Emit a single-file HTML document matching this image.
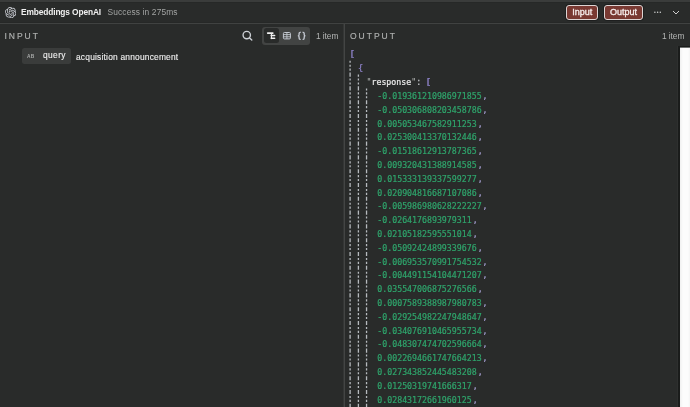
<!DOCTYPE html>
<html>
<head>
<meta charset="utf-8">
<title>Embeddings OpenAI</title>
<style>
html,body{margin:0;padding:0;}
body{width:690px;height:407px;overflow:hidden;background:#292b2a;position:relative;font-family:"Liberation Sans",sans-serif;color:#e8e8e8;}
.abs{position:absolute;white-space:nowrap;}
#topstrip{left:0;top:0;width:690px;height:1.8px;background:#3a3c3b;border-bottom:1.2px solid #262827;}
#hdrline{left:0;top:23.2px;width:690px;height:1.3px;background:#404241;border-top:1.3px solid #262827;margin-top:-1.3px;}
#vdiv{left:342.7px;top:24px;width:2.4px;height:383px;background:#343635;border-right:1px solid #434544;box-sizing:border-box;}
#title{left:21px;top:6.5px;font-size:8.4px;letter-spacing:-0.14px;line-height:11px;font-weight:bold;color:#f0f0f0;}
#status{left:107.5px;top:6.5px;font-size:8.4px;letter-spacing:0.14px;line-height:11px;color:#a3a5a4;}
.sect{font-size:8.5px;line-height:10px;letter-spacing:2px;color:#b0b2b1;-webkit-text-stroke:0.15px;}
#inlabel{left:4.4px;top:31px;}
#outlabel{left:350px;top:31px;}
.items{letter-spacing:-0.06px;font-size:8.4px;line-height:11px;color:#b4b6b5;}
#items1{left:315.9px;top:31px;}
#items2{left:661.9px;top:31px;}
#pill{left:21.5px;top:47.7px;width:49.5px;height:16px;background:#3a3c3b;border-radius:2.5px;}
#ab{left:27px;top:53.8px;font-size:4.8px;line-height:6px;font-weight:bold;color:#a9abaa;letter-spacing:.3px;}
#qkey{left:43px;top:50.3px;letter-spacing:0.4px;-webkit-text-stroke:0.12px;font-size:8.4px;line-height:11px;color:#efefef;}
#qval{left:76px;top:51.7px;letter-spacing:0.21px;-webkit-text-stroke:0.12px;font-size:8.4px;line-height:11px;color:#efefef;}
#toggle{left:262.4px;top:26.6px;width:47.8px;height:18.3px;background:#424443;border-radius:3px;}
#tgactive{left:264px;top:28px;width:15px;height:15px;background:#292b2a;border-radius:2.5px;}
.btn{top:5.3px;height:14.5px;box-sizing:border-box;background:#793932;border:1px solid #ddd5d4;border-radius:3px;box-shadow:0 0 0 0.8px #1b1d1c;font-size:9px;-webkit-text-stroke:0.3px #f7efee;line-height:12.3px;text-align:center;color:#f7efee;}
#btnin{left:566.3px;width:32px;}
#btnout{left:604.3px;width:38.5px;}
#scroll{left:678px;top:46px;width:12px;height:361px;background:linear-gradient(to bottom,#6e706f 0,#6e706f 1px,rgba(0,0,0,0) 1px),linear-gradient(to right,#f0f0f0,#fcfcfc 3px,#fcfcfc 8px,#f4f4f4);border-left:2px solid #1a1c1b;border-top:1px solid #1a1c1b;box-sizing:border-box;box-shadow:-1px 0 0 #2e302f;}
#json{left:0;top:0;font-family:"DejaVu Sans Mono","Liberation Mono",monospace;font-size:8.25px;-webkit-text-stroke:0.2px;}
.ln{position:absolute;white-space:nowrap;line-height:12px;height:12px;}
.p{color:#8f84cb;}
.c{color:#a9a2d6;margin-left:1px;}
.k{color:#ececec;}
.q{color:#b9bbba;-webkit-text-stroke:0;}
.co{color:#c4c6cc;}
.n{color:#2fa56c;}
.guide{position:absolute;width:1.3px;background:repeating-linear-gradient(to bottom,#a9adb0 0,#a9adb0 2.6px,rgba(169,173,176,0) 2.6px,rgba(169,173,176,0) 4.14px);}
</style>
</head>
<body>
<div id="root" style="position:absolute;left:0;top:0;width:690px;height:407px;will-change:transform;">
<div class="abs" id="topstrip"></div>
<div class="abs" id="hdrline"></div>
<div class="abs" id="vdiv"></div>

<svg class="abs" id="logo" style="left:4.7px;top:6.8px" width="11.3" height="11.3" viewBox="0 0 24 24" fill="#cfd2d9"><path d="M22.2819 9.8211a5.9847 5.9847 0 0 0-.5157-4.9108 6.0462 6.0462 0 0 0-6.5098-2.9A6.0651 6.0651 0 0 0 4.9807 4.1818a5.9847 5.9847 0 0 0-3.9977 2.9 6.0462 6.0462 0 0 0 .7427 7.0966 5.98 5.98 0 0 0 .511 4.9107 6.051 6.051 0 0 0 6.5146 2.9001A5.9847 5.9847 0 0 0 13.2599 24a6.0557 6.0557 0 0 0 5.7718-4.2058 5.9894 5.9894 0 0 0 3.9977-2.9001 6.0557 6.0557 0 0 0-.7475-7.0729zm-9.022 12.6081a4.4755 4.4755 0 0 1-2.8764-1.0408l.1419-.0804 4.7783-2.7582a.7948.7948 0 0 0 .3927-.6813v-6.7369l2.02 1.1686a.071.071 0 0 1 .038.052v5.5826a4.504 4.504 0 0 1-4.4945 4.4944zm-9.6607-4.1254a4.4708 4.4708 0 0 1-.5346-3.0137l.142.0852 4.783 2.7582a.7712.7712 0 0 0 .7806 0l5.8428-3.3685v2.3324a.0804.0804 0 0 1-.0332.0615L9.74 19.9502a4.4992 4.4992 0 0 1-6.1408-1.6464zM2.3408 7.8956a4.485 4.485 0 0 1 2.3655-1.9728V11.6a.7664.7664 0 0 0 .3879.6765l5.8144 3.3543-2.0201 1.1685a.0757.0757 0 0 1-.071 0l-4.8303-2.7865A4.504 4.504 0 0 1 2.3408 7.872zm16.5963 3.8558L13.1038 8.364 15.1192 7.2a.0757.0757 0 0 1 .071 0l4.8303 2.7913a4.4944 4.4944 0 0 1-.6765 8.1042v-5.6772a.79.79 0 0 0-.407-.667zm2.0107-3.0231l-.142-.0852-4.7735-2.7818a.7759.7759 0 0 0-.7854 0L9.409 9.2297V6.8974a.0662.0662 0 0 1 .0284-.0615l4.8303-2.7866a4.4992 4.4992 0 0 1 6.6802 4.66zM8.3065 12.863l-2.02-1.1638a.0804.0804 0 0 1-.038-.0567V6.0742a4.4992 4.4992 0 0 1 7.3757-3.4537l-.142.0805L8.704 5.459a.7948.7948 0 0 0-.3927.6813zm1.0976-2.3654l2.602-1.4998 2.6069 1.4998v2.9994l-2.5974 1.4997-2.6067-1.4997Z"/></svg>
<div class="abs" id="title">Embeddings OpenAI</div>
<div class="abs" id="status">Success in 275ms</div>

<div class="abs btn" id="btnin">Input</div>
<div class="abs btn" id="btnout">Output</div>
<svg class="abs" id="dots" style="left:653px;top:10px" width="10" height="5" viewBox="0 0 10 5" fill="#d0d2d1"><circle cx="1.9" cy="2.3" r="0.75"/><circle cx="4.6" cy="2.3" r="0.75"/><circle cx="7.3" cy="2.3" r="0.75"/></svg>
<svg class="abs" style="left:672px;top:10px" width="8" height="5" viewBox="0 0 8 5" fill="none" stroke="#cfcfcf" stroke-width="1"><path d="M1 1l3 3 3-3"/></svg>

<div class="abs sect" id="inlabel">INPUT</div>
<svg class="abs" id="search" style="left:240px;top:29px" width="14" height="14" viewBox="0 0 14 14" fill="none" stroke="#cdd1d6" stroke-width="1.35" stroke-linecap="round"><circle cx="6.75" cy="6.05" r="3.7"/><path d="M9.6 8.9l2.2 2.2"/></svg>
<div class="abs" id="toggle"></div>
<div class="abs" id="tgactive"></div>
<svg class="abs" id="ic-schema" style="left:266px;top:31px" width="10" height="10" viewBox="0 0 10 10" fill="none" stroke="#f0f0f0" stroke-linecap="round" stroke-linejoin="round"><path d="M1.7 2.1h5.1" stroke-width="1.7"/><path d="M5.4 2.6v5" stroke-width="1.1"/><path d="M5.3 4.5h3.3M5.3 7.2h3.3" stroke-width="1.6"/></svg>
<svg class="abs" id="ic-table" style="left:282px;top:31px" width="10" height="10" viewBox="0 0 10 10" fill="none" stroke="#c3c8d0" stroke-width="1"><rect x="1.4" y="1.5" width="7" height="6.4" rx="1"/><path d="M1.4 3.6h7M1.4 5.8h7M4.9 1.5v6.4" stroke-width="0.9"/></svg>
<svg class="abs" id="ic-json" style="left:297px;top:31px" width="10" height="10" viewBox="0 0 10 10" fill="none" stroke="#c3c8d0" stroke-width="1.35" stroke-linecap="round" stroke-linejoin="round"><path d="M3.2 1.3c-.9.1-1.1.6-1.1 1.3v1c0 .7-.2 1.05-.75 1.2.55.15.75.5.75 1.2v1c0 .7.2 1.2 1.1 1.3"/><path d="M6.1 1.3c.9.1 1.1.6 1.1 1.3v1c0 .7.2 1.05.75 1.2-.55.15-.75.5-.75 1.2v1c0 .7-.2 1.2-1.1 1.3"/></svg>
<div class="abs items" id="items1">1 item</div>

<div class="abs" id="pill"></div>
<div class="abs" id="ab">AB</div>
<div class="abs" id="qkey">query</div>
<div class="abs" id="qval">acquisition announcement</div>

<div class="abs sect" id="outlabel">OUTPUT</div>
<div class="abs items" id="items2">1 item</div>
<div class="abs" id="scroll"></div>

<div class="abs" id="json">
<svg class="abs" id="guides" style="left:345px;top:0" width="30" height="407" viewBox="0 0 30 407" fill="none" stroke="#b6babe" stroke-width="1.3" stroke-dasharray="4.14 1.84 2.07 1.84 2.07 1.84" stroke-dashoffset="2.07"><path d="M5.1 60.8V407"/><path d="M13.4 74.6V407"/><path d="M21.55 88.4V407"/></svg>
<div class="ln" style="left:349.3px;top:48.3px;transform:scale(1.3,1.15);transform-origin:0 80%"><span class="p">[</span></div>
<div class="ln" style="left:358.3px;top:62.3px;transform:scale(1.05,1.15);transform-origin:0 80%"><span class="p">{</span></div>
<div class="ln" style="left:366.5px;top:76px"><span class="q">"</span><span class="k">response</span><span class="q">"</span><span class="co">:</span> <span class="p" style="display:inline-block;transform:scaleX(1.35);transform-origin:55% 50%">[</span></div>
<div class="ln" style="left:377.3px;top:90.00px"><span class="n">-0.019361210986971855</span><span class="c">,</span></div>
<div class="ln" style="left:377.3px;top:103.80px"><span class="n">-0.050306808203458786</span><span class="c">,</span></div>
<div class="ln" style="left:377.3px;top:117.60px"><span class="n">0.005053467582911253</span><span class="c">,</span></div>
<div class="ln" style="left:377.3px;top:131.40px"><span class="n">0.025300413370132446</span><span class="c">,</span></div>
<div class="ln" style="left:377.3px;top:145.20px"><span class="n">-0.01518612913787365</span><span class="c">,</span></div>
<div class="ln" style="left:377.3px;top:159.00px"><span class="n">0.009320431388914585</span><span class="c">,</span></div>
<div class="ln" style="left:377.3px;top:172.80px"><span class="n">0.015333139337599277</span><span class="c">,</span></div>
<div class="ln" style="left:377.3px;top:186.60px"><span class="n">0.020904816687107086</span><span class="c">,</span></div>
<div class="ln" style="left:377.3px;top:200.40px"><span class="n">-0.005986980628222227</span><span class="c">,</span></div>
<div class="ln" style="left:377.3px;top:214.20px"><span class="n">-0.0264176893979311</span><span class="c">,</span></div>
<div class="ln" style="left:377.3px;top:228.00px"><span class="n">0.02105182595551014</span><span class="c">,</span></div>
<div class="ln" style="left:377.3px;top:241.80px"><span class="n">-0.05092424899339676</span><span class="c">,</span></div>
<div class="ln" style="left:377.3px;top:255.60px"><span class="n">-0.006953570991754532</span><span class="c">,</span></div>
<div class="ln" style="left:377.3px;top:269.40px"><span class="n">-0.004491154104471207</span><span class="c">,</span></div>
<div class="ln" style="left:377.3px;top:283.20px"><span class="n">0.035547006875276566</span><span class="c">,</span></div>
<div class="ln" style="left:377.3px;top:297.00px"><span class="n">0.0007589388987980783</span><span class="c">,</span></div>
<div class="ln" style="left:377.3px;top:310.80px"><span class="n">-0.029254982247948647</span><span class="c">,</span></div>
<div class="ln" style="left:377.3px;top:324.60px"><span class="n">-0.034076910465955734</span><span class="c">,</span></div>
<div class="ln" style="left:377.3px;top:338.40px"><span class="n">-0.048307474702596664</span><span class="c">,</span></div>
<div class="ln" style="left:377.3px;top:352.20px"><span class="n">0.0022694661747664213</span><span class="c">,</span></div>
<div class="ln" style="left:377.3px;top:366.00px"><span class="n">0.027343852445483208</span><span class="c">,</span></div>
<div class="ln" style="left:377.3px;top:379.80px"><span class="n">0.01250319741666317</span><span class="c">,</span></div>
<div class="ln" style="left:377.3px;top:393.60px"><span class="n">0.02843172661960125</span><span class="c">,</span></div>


</div>
</div>
</body>
</html>
